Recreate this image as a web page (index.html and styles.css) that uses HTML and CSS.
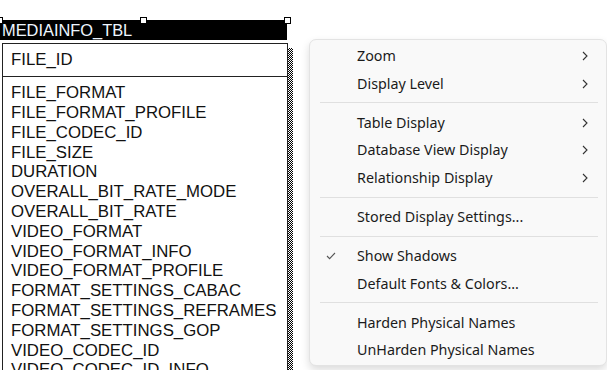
FILE: index.html
```html
<!DOCTYPE html>
<html lang="en">
<head>
    <meta charset="UTF-8">
    <title>MEDIAINFO_TBL</title>
    <link rel="stylesheet" href="styles.css">
</head>
<body>
    <div class="canvas">
        <div class="entity">
            <div class="entity-title">
                MEDIAINFO_TBL
                <span class="handle handle-left"></span>
                <span class="handle handle-mid"></span>
                <span class="handle handle-right"></span>
            </div>
            <div class="entity-row">
                <div class="entity-box">
                    <div class="keys">
                        <div class="col">FILE_ID</div>
                    </div>
                    <div class="attrs">
                        <div class="col">FILE_FORMAT</div>
                        <div class="col">FILE_FORMAT_PROFILE</div>
                        <div class="col">FILE_CODEC_ID</div>
                        <div class="col">FILE_SIZE</div>
                        <div class="col">DURATION</div>
                        <div class="col">OVERALL_BIT_RATE_MODE</div>
                        <div class="col">OVERALL_BIT_RATE</div>
                        <div class="col">VIDEO_FORMAT</div>
                        <div class="col">VIDEO_FORMAT_INFO</div>
                        <div class="col">VIDEO_FORMAT_PROFILE</div>
                        <div class="col">FORMAT_SETTINGS_CABAC</div>
                        <div class="col">FORMAT_SETTINGS_REFRAMES</div>
                        <div class="col">FORMAT_SETTINGS_GOP</div>
                        <div class="col">VIDEO_CODEC_ID</div>
                        <div class="col">VIDEO_CODEC_ID_INFO</div>
                    </div>
                </div>
                <div class="entity-shadow"></div>
            </div>
        </div>

        <div class="menu">
            <div class="item">Zoom<svg class="arrow" viewBox="0 0 6 10"><polyline points="1,1 5,5 1,9"/></svg></div>
            <div class="item">Display Level<svg class="arrow" viewBox="0 0 6 10"><polyline points="1,1 5,5 1,9"/></svg></div>
            <div class="sep"></div>
            <div class="item">Table Display<svg class="arrow" viewBox="0 0 6 10"><polyline points="1,1 5,5 1,9"/></svg></div>
            <div class="item">Database View Display<svg class="arrow" viewBox="0 0 6 10"><polyline points="1,1 5,5 1,9"/></svg></div>
            <div class="item">Relationship Display<svg class="arrow" viewBox="0 0 6 10"><polyline points="1,1 5,5 1,9"/></svg></div>
            <div class="sep"></div>
            <div class="item">Stored Display Settings...</div>
            <div class="sep"></div>
            <div class="item"><svg class="check" viewBox="0 0 10 8"><polyline points="1,4 3.6,6.6 9,1"/></svg>Show Shadows</div>
            <div class="item">Default Fonts &amp; Colors...</div>
            <div class="sep"></div>
            <div class="item">Harden Physical Names</div>
            <div class="item">UnHarden Physical Names</div>
        </div>
    </div>
</body>
</html>
```

FILE: styles.css
```css
html, body {
    margin: 0;
    background: #fff;
}
.canvas {
    position: relative;
    width: 607px;
    height: 370px;
    overflow: hidden;
}
.entity {
    padding-top: 20px;
    font-family: "Liberation Sans", Arial, sans-serif;
    font-size: 16.8px;
    color: #111;
}
.entity-title {
    position: relative;
    width: 285px;
    height: 20px;
    padding-left: 2px;
    line-height: 21px;
    font-size: 16.4px;
    background: #000;
    color: #eef6ff;
}
.handle {
    position: absolute;
    top: -3px;
    width: 5px;
    height: 5px;
    background: #fff;
    border: 1px solid #000;
}
.handle-left {
    left: -4px;
}
.handle-mid {
    left: 140px;
}
.handle-right {
    left: 284px;
}
.entity-row {
    display: flex;
    margin-top: 3px;
    margin-left: 2px;
}
.entity-box {
    width: 284px;
    border: 1px solid #222;
    border-bottom: none;
}
.keys {
    padding: 6px 8px 6px;
    border-bottom: 1px solid #222;
}
.attrs {
    padding: 6.5px 8px 0;
}
.col {
    line-height: 19.8px;
    height: 19.8px;
    white-space: nowrap;
}
.entity-shadow {
    width: 5px;
    margin-top: 5px;
    background-image: repeating-conic-gradient(#000 0 25%, #fff 0 50%);
    background-size: 2px 2px;
}
.menu {
    position: absolute;
    left: 309px;
    top: 39px;
    width: 296px;
    padding: 2px 0 1px;
    background: #f9f9f9;
    border: 1px solid #e3e3e3;
    border-radius: 7px;
    box-shadow: 0 4px 8px rgba(0, 0, 0, 0.14);
    font-family: "Noto Sans", sans-serif;
    font-size: 14.3px;
    color: #1b1b1b;
}
.item {
    position: relative;
    display: flex;
    align-items: center;
    height: 27.6px;
    padding-left: 47px;
}
.arrow {
    position: absolute;
    right: 18px;
    top: 9px;
    width: 6px;
    height: 10px;
    fill: none;
    stroke: #333;
    stroke-width: 1.1;
}
.check {
    position: absolute;
    left: 16px;
    top: 10px;
    width: 10px;
    height: 8px;
    fill: none;
    stroke: #555;
    stroke-width: 1.1;
}
.sep {
    height: 11.4px;
    margin: 0 8px 0 10px;
    display: flex;
    align-items: center;
}
.sep::before {
    content: "";
    flex: 1;
    height: 1px;
    background: #e0e0e0;
}
```
